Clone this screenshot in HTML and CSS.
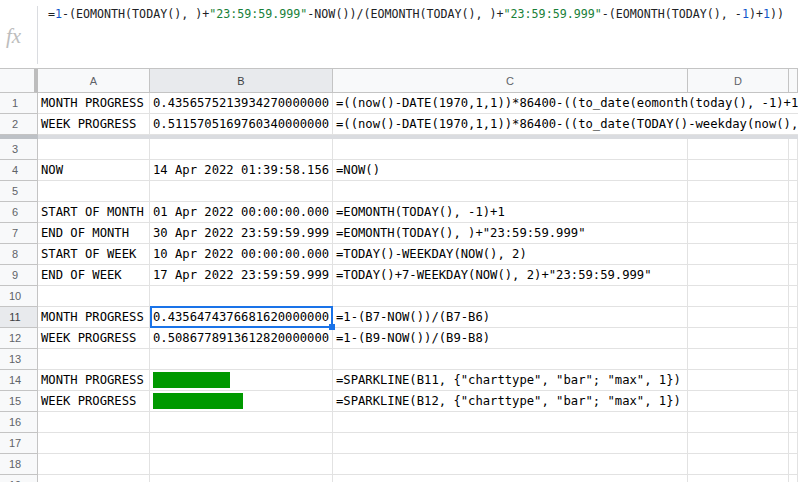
FILE: index.html
```html
<!DOCTYPE html>
<html lang="en">
<head>
    <meta charset="UTF-8">
    <meta name="viewport" content="width=device-width, initial-scale=1.0">
    <title>Progress - Google Sheets</title>
    <link rel="stylesheet" href="styles.css">
</head>
<body>
    <div class="formula-bar">
        <div class="fx">fx</div>
        <div class="formula">=<span class="num">1</span>-(EOMONTH(TODAY(), )+<span class="str">"23:59:59.999"</span>-NOW())/(EOMONTH(TODAY(), )+<span class="str">"23:59:59.999"</span>-(EOMONTH(TODAY(), -<span class="num">1</span>)+<span class="num">1</span>))</div>
    </div>

    <div class="sheet">
        <div class="row head">
            <div class="corner"></div>
            <div class="col">A</div>
            <div class="col active">B</div>
            <div class="col">C</div>
            <div class="col">D</div>
            <div class="col"></div>
        </div>

        <div class="row">
            <div class="rh">1</div>
            <div class="cell">MONTH PROGRESS</div>
            <div class="cell">0.4356575213934270000000</div>
            <div class="cell wide">=((now()-DATE(1970,1,1))*86400-((to_date(eomonth(today(), -1)+1)-DATE(1970,1,1))*86400))/((to_date(eomonth(today(), 0)+1)-DATE(1970,1,1))*86400)</div>
        </div>
        <div class="row">
            <div class="rh">2</div>
            <div class="cell">WEEK PROGRESS</div>
            <div class="cell">0.5115705169760340000000</div>
            <div class="cell wide">=((now()-DATE(1970,1,1))*86400-((to_date(TODAY()-weekday(now(), 2)+1)-DATE(1970,1,1))*86400))/(7*86400)</div>
        </div>
        <div class="row freeze">
            <div class="rh"></div>
            <div class="band"></div>
        </div>
        <div class="row">
            <div class="rh">3</div>
            <div class="cell"></div><div class="cell"></div><div class="cell"></div><div class="cell"></div><div class="cell"></div>
        </div>
        <div class="row">
            <div class="rh">4</div>
            <div class="cell">NOW</div>
            <div class="cell">14 Apr 2022 01:39:58.156</div>
            <div class="cell">=NOW()</div>
            <div class="cell"></div><div class="cell"></div>
        </div>
        <div class="row">
            <div class="rh">5</div>
            <div class="cell"></div><div class="cell"></div><div class="cell"></div><div class="cell"></div><div class="cell"></div>
        </div>
        <div class="row">
            <div class="rh">6</div>
            <div class="cell">START OF MONTH</div>
            <div class="cell">01 Apr 2022 00:00:00.000</div>
            <div class="cell">=EOMONTH(TODAY(), -1)+1</div>
            <div class="cell"></div><div class="cell"></div>
        </div>
        <div class="row">
            <div class="rh">7</div>
            <div class="cell">END OF MONTH</div>
            <div class="cell">30 Apr 2022 23:59:59.999</div>
            <div class="cell">=EOMONTH(TODAY(), )+"23:59:59.999"</div>
            <div class="cell"></div><div class="cell"></div>
        </div>
        <div class="row">
            <div class="rh">8</div>
            <div class="cell">START OF WEEK</div>
            <div class="cell">10 Apr 2022 00:00:00.000</div>
            <div class="cell">=TODAY()-WEEKDAY(NOW(), 2)</div>
            <div class="cell"></div><div class="cell"></div>
        </div>
        <div class="row">
            <div class="rh">9</div>
            <div class="cell">END OF WEEK</div>
            <div class="cell">17 Apr 2022 23:59:59.999</div>
            <div class="cell">=TODAY()+7-WEEKDAY(NOW(), 2)+"23:59:59.999"</div>
            <div class="cell"></div><div class="cell"></div>
        </div>
        <div class="row">
            <div class="rh">10</div>
            <div class="cell"></div><div class="cell"></div><div class="cell"></div><div class="cell"></div><div class="cell"></div>
        </div>
        <div class="row">
            <div class="rh active">11</div>
            <div class="cell">MONTH PROGRESS</div>
            <div class="cell selected">0.4356474376681620000000<span class="handle"></span></div>
            <div class="cell">=1-(B7-NOW())/(B7-B6)</div>
            <div class="cell"></div><div class="cell"></div>
        </div>
        <div class="row">
            <div class="rh">12</div>
            <div class="cell">WEEK PROGRESS</div>
            <div class="cell">0.5086778913612820000000</div>
            <div class="cell">=1-(B9-NOW())/(B9-B8)</div>
            <div class="cell"></div><div class="cell"></div>
        </div>
        <div class="row">
            <div class="rh">13</div>
            <div class="cell"></div><div class="cell"></div><div class="cell"></div><div class="cell"></div><div class="cell"></div>
        </div>
        <div class="row">
            <div class="rh">14</div>
            <div class="cell">MONTH PROGRESS</div>
            <div class="cell spark"><div class="bar" style="width: 43.56%"></div></div>
            <div class="cell">=SPARKLINE(B11, {"charttype", "bar"; "max", 1})</div>
            <div class="cell"></div><div class="cell"></div>
        </div>
        <div class="row">
            <div class="rh">15</div>
            <div class="cell">WEEK PROGRESS</div>
            <div class="cell spark"><div class="bar" style="width: 50.87%"></div></div>
            <div class="cell">=SPARKLINE(B12, {"charttype", "bar"; "max", 1})</div>
            <div class="cell"></div><div class="cell"></div>
        </div>
        <div class="row">
            <div class="rh">16</div>
            <div class="cell"></div><div class="cell"></div><div class="cell"></div><div class="cell"></div><div class="cell"></div>
        </div>
        <div class="row">
            <div class="rh">17</div>
            <div class="cell"></div><div class="cell"></div><div class="cell"></div><div class="cell"></div><div class="cell"></div>
        </div>
        <div class="row">
            <div class="rh">18</div>
            <div class="cell"></div><div class="cell"></div><div class="cell"></div><div class="cell"></div><div class="cell"></div>
        </div>
        <div class="row">
            <div class="rh">19</div>
            <div class="cell"></div><div class="cell"></div><div class="cell"></div><div class="cell"></div><div class="cell"></div>
        </div>
    </div>
</body>
</html>
```

FILE: styles.css
```css
:root {
    --grid-line: #e2e2e2;
    --header-line: #c4c4c4;
    --header-bg: #f8f9fa;
    --header-active: #e8eaed;
    --header-text: #5f6368;
    --select-blue: #1a73e8;
    --spark-green: #009900;
}

html, body {
    margin: 0;
    width: 798px;
    height: 482px;
    overflow: hidden;
    background: #ffffff;
}

body {
    font-family: "DejaVu Sans Mono", "Liberation Mono", monospace;
    color: #000000;
}

/* Formula bar */
.formula-bar {
    display: flex;
    height: 69px;
    box-sizing: border-box;
    border-bottom: 1px solid var(--header-line);
}

.fx {
    width: 38px;
    height: 58px;
    margin-top: 6px;
    box-sizing: border-box;
    border-right: 1px solid #dadce0;
    display: flex;
    align-items: center;
    padding-left: 6px;
    padding-top: 2px;
    font-family: "Liberation Serif", serif;
    font-style: italic;
    font-size: 21px;
    color: #bdbdbd;
}

.formula {
    padding: 6px 0 0 10px;
    font-size: 11.65px;
    line-height: 17px;
    white-space: nowrap;
    color: #202124;
}

.formula .str { color: #188038; }
.formula .num { color: #1155cc; }

/* Grid */
.row {
    display: grid;
    grid-template-columns: 38px 112px 183px 355px 101px 1fr;
    height: 21px;
}

.row.head {
    height: 24px;
}

.corner {
    background: var(--header-bg);
    border-right: 4px solid #bdbdbd;
    border-bottom: 1px solid var(--header-line);
}

.col {
    background: var(--header-bg);
    border-right: 1px solid var(--header-line);
    border-bottom: 1px solid var(--header-line);
    font-family: "Liberation Sans", Arial, sans-serif;
    font-size: 11px;
    color: var(--header-text);
    display: flex;
    align-items: center;
    justify-content: center;
    padding-top: 1px;
}

.col.active {
    background: var(--header-active);
    color: #3c4043;
}

.rh {
    background: var(--header-bg);
    border-right: 1px solid var(--header-line);
    border-bottom: 1px solid var(--header-line);
    font-family: "Liberation Sans", Arial, sans-serif;
    font-size: 11px;
    color: var(--header-text);
    text-align: center;
    padding-right: 7px;
    line-height: 20px;
}

.rh.active {
    background: var(--header-active);
    color: #3c4043;
}

.row > * {
    box-sizing: border-box;
}

.cell {
    border-right: 1px solid var(--grid-line);
    border-bottom: 1px solid var(--grid-line);
    padding: 1px 2px 0 3px;
    font-size: 12.2px;
    line-height: 19px;
    white-space: nowrap;
    overflow: hidden;
}

.cell.wide {
    grid-column: 4 / -1;
    border-right: none;
}

/* frozen rows divider */
.row.freeze {
    height: 4px;
}

.row.freeze .rh {
    background: #bdc1c6;
    border: none;
}

.row.freeze .band {
    grid-column: 2 / -1;
    background: #dadce0;
}

/* selected cell */
.cell.selected {
    position: relative;
    overflow: visible;
}

.cell.selected::before {
    content: "";
    position: absolute;
    top: -1px;
    left: 0;
    right: -1px;
    bottom: -1px;
    border: 2px solid var(--select-blue);
}

.handle {
    position: absolute;
    right: -3px;
    bottom: -3px;
    width: 6px;
    height: 6px;
    background: var(--select-blue);
}

/* sparklines */
.cell.spark {
    padding-top: 1px;
}

.bar {
    height: 16px;
    margin-top: 1px;
    background: var(--spark-green);
}
```
